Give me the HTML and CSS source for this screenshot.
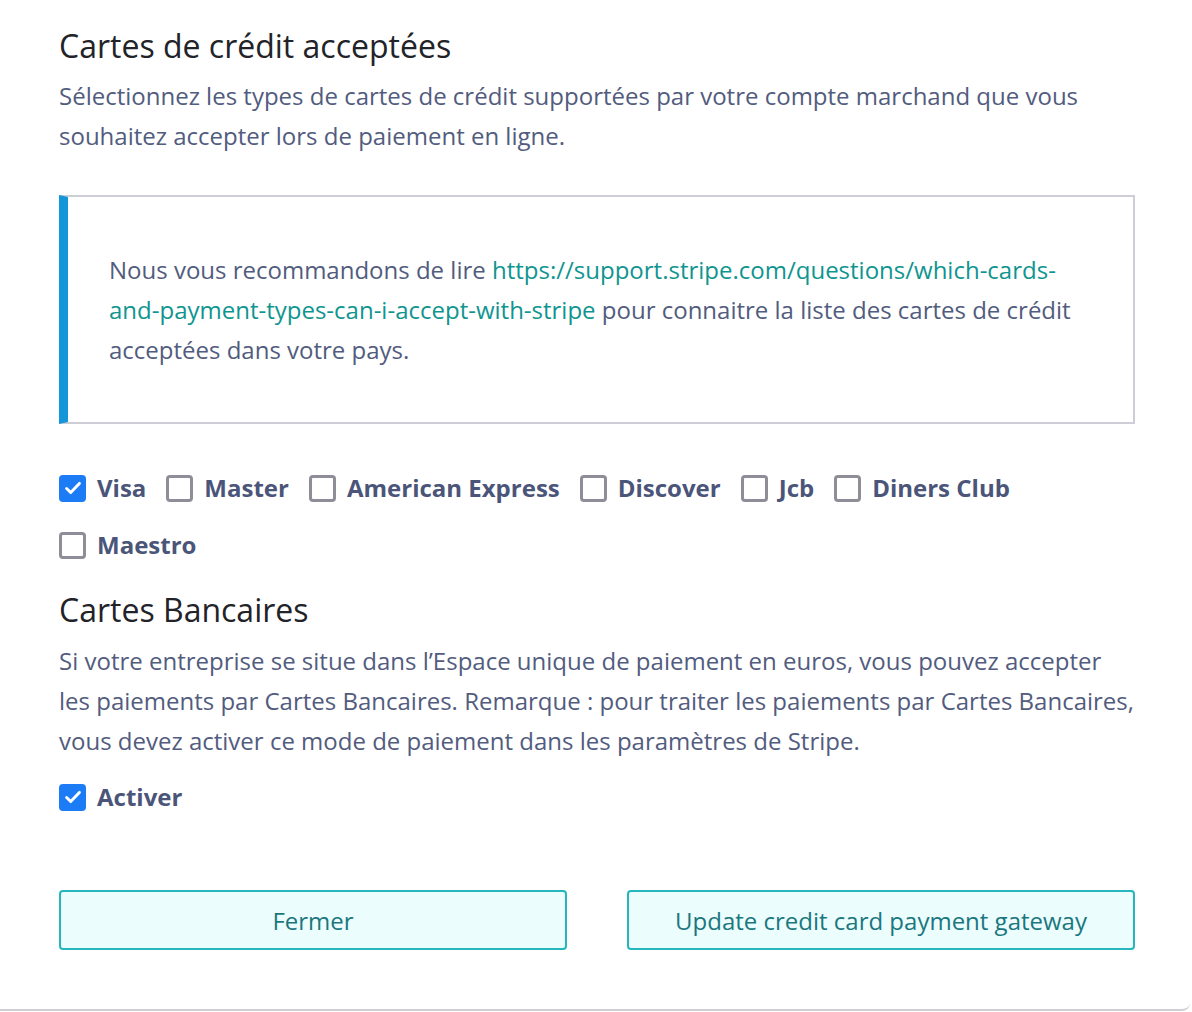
FILE: index.html
```html
<!DOCTYPE html>
<html>
    <head>
        <meta charset="utf-8">
        <title>Cartes de crédit acceptées</title>
        <link rel="stylesheet" href="styles.css">
    </head>
    <body>
        <div class="card">
            <h2 class="title">Cartes de crédit acceptées</h2>
            <p class="desc">Sélectionnez les types de cartes de crédit supportées par votre compte marchand que vous souhaitez accepter lors de paiement en ligne.</p>

            <div class="notice">
                <p>Nous vous recommandons de lire <a href="#">https://support.stripe.com/questions/which-cards-and-payment-types-can-i-accept-with-stripe</a> pour connaitre la liste des cartes de crédit acceptées dans votre pays.</p>
            </div>

            <div class="checks">
                <label class="check"><span class="box checked"><svg viewBox="0 0 24 24" width="22" height="22"><path d="M5 12.5l4.5 4.5L19 7" fill="none" stroke="#fff" stroke-width="3.2" stroke-linecap="round" stroke-linejoin="round"/></svg></span>Visa</label>
                <label class="check"><span class="box"></span>Master</label>
                <label class="check"><span class="box"></span>American Express</label>
                <label class="check"><span class="box"></span>Discover</label>
                <label class="check"><span class="box"></span>Jcb</label>
                <label class="check"><span class="box"></span>Diners Club</label>
                <label class="check"><span class="box"></span>Maestro</label>
            </div>

            <h2 class="title sub">Cartes Bancaires</h2>
            <p class="desc tight">Si votre entreprise se situe dans l’Espace unique de paiement en euros, vous pouvez accepter les paiements par Cartes Bancaires. Remarque : pour traiter les paiements par Cartes Bancaires, vous devez activer ce mode de paiement dans les paramètres de Stripe.</p>

            <div class="checks single">
                <label class="check"><span class="box checked"><svg viewBox="0 0 24 24" width="22" height="22"><path d="M5 12.5l4.5 4.5L19 7" fill="none" stroke="#fff" stroke-width="3.2" stroke-linecap="round" stroke-linejoin="round"/></svg></span>Activer</label>
            </div>

            <div class="actions">
                <button class="btn">Fermer</button>
                <button class="btn">Update credit card payment gateway</button>
            </div>
        </div>
    </body>
</html>
```

FILE: styles.css
```css
/* page base */
body {
    margin: 0;
    background: #fff;
    font-family: "Open Sans", "Noto Sans", sans-serif;
    font-size: 24px;
    line-height: 40px;
    color: #525c7e;
}

.card {
    box-sizing: border-box;
    width: 1190px;
    height: 1011px;
    padding: 26px 55px 0 59px;
    background: #fff;
    border-bottom: 2px solid #cfd0d6;
    border-bottom-right-radius: 8px;
}

.title {
    margin: 0;
    font-size: 32px;
    font-weight: 400;
    line-height: 40px;
    color: #222328;
}

.title.sub {
    margin-top: 25px;
}

.desc {
    margin: 10px 0 0;
}

.desc.tight {
    margin-top: 11px;
}

/* info box with blue accent */
.notice {
    margin-top: 39px;
    border: 2px solid #cdced7;
    border-left: 9px solid #1497d9;
    padding: 53px 40px 52px 41px;
}

.notice p {
    margin: 0;
}

.notice a {
    color: #0f9590;
    text-decoration: none;
}

/* checkboxes */
.checks {
    display: flex;
    flex-wrap: wrap;
    column-gap: 20px;
    row-gap: 17px;
    margin-top: 44px;
}

.checks.single {
    margin-top: 16px;
}

.check {
    display: flex;
    align-items: center;
    gap: 11px;
    font-weight: 700;
    color: #4b5579;
}

.box {
    box-sizing: border-box;
    width: 27px;
    height: 27px;
    border: 3px solid #8e8d98;
    border-radius: 4px;
    display: flex;
    align-items: center;
    justify-content: center;
}

.box.checked {
    border: none;
    background: #1b7cf5;
}

/* footer buttons */
.actions {
    display: grid;
    grid-template-columns: 1fr 1fr;
    column-gap: 60px;
    margin-top: 73px;
}

.btn {
    height: 60px;
    border: 2px solid #25b6be;
    border-radius: 4px;
    background: #ebfdfc;
    color: #1b777f;
    font-family: "Open Sans", "Noto Sans", sans-serif;
    font-size: 24px;
}
```
